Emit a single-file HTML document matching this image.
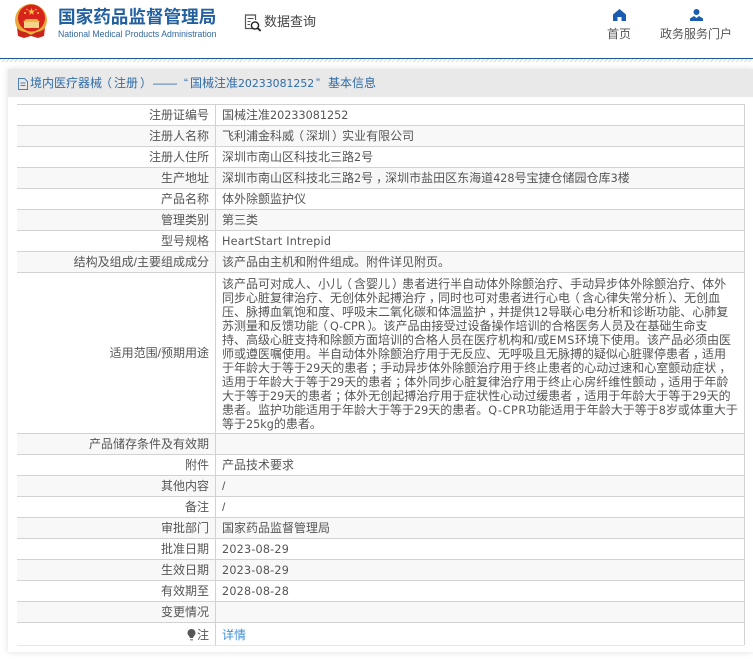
<!DOCTYPE html>
<html lang="zh"><head><meta charset="utf-8"><style>
html,body{margin:0;padding:0;background:#fff}
body{width:753px;height:660px;position:relative;overflow:hidden;font-family:"Liberation Sans","Noto Sans CJK SC",sans-serif;font-size:12px;color:#555}
.a{position:absolute;white-space:nowrap}
.l{font-family:"DejaVu Sans",sans-serif;font-size:11.2px;line-height:0}
.s{letter-spacing:.2px}
.w{letter-spacing:.6px}
.o,.c,.m{position:relative;line-height:0}
.o{left:-2px}.c{left:2px}.m{left:3px}
.panel{position:absolute;left:8px;top:69px;width:745px;height:583px;background:#fff;box-shadow:0 0 6px rgba(0,0,0,.14)}
.bar{position:absolute;left:8px;top:69px;width:745px;height:28px;background:#e9e9e9}
.r{position:absolute;left:17px;width:727px;height:20px;border-top:1px solid #d2d2d2;line-height:20px}
.g{background:#f8f8f8}
.k{position:absolute;right:535px;top:0;white-space:nowrap}
.v{position:absolute;left:205px;top:0;white-space:nowrap}
.d{position:absolute;left:215px;top:104px;width:1px;height:541px;background:#d2d2d2}
.t{position:absolute;left:222px;top:277px;line-height:14px;white-space:nowrap}
.h{color:#2f6ca8;top:75px;line-height:17px}
</style></head><body>
<svg class="a" style="left:14px;top:3px" width="34" height="36" viewBox="0 0 34 36">
<ellipse cx="17" cy="17" rx="16" ry="16" fill="#e9a93a"/><circle cx="17.500" cy="15" r="13.500" fill="#d8231c"/>
<path d="M17.500 5l1 2.600h2.600l-2.100 1.700.8 2.600-2.300-1.600-2.300 1.600.8-2.600-2.100-1.700h2.600z" fill="#f6c644"/>
<circle cx="11" cy="10" r="1" fill="#f6c644"/><circle cx="24" cy="10" r="1" fill="#f6c644"/><circle cx="13" cy="6.500" r=".8" fill="#f6c644"/><circle cx="22" cy="6.500" r=".8" fill="#f6c644"/>
<rect x="10" y="19" width="15" height="6" fill="#f3d48a"/><path d="M9 19h17l-3-3H12z" fill="#f0b93c"/>
<path d="M3 25c3 3 6 4 9 4l5 2 5-2c3 0 6-1 9-4l-1 8-6 2-7-2-7 2-6-2z" fill="#c8281c"/><path d="M9 27l8 4 8-4" stroke="#f0b93c" stroke-width="1.500" fill="none"/>
</svg>
<div class="a" style="left:58px;top:6px;font-size:17.600px;line-height:22px;font-weight:700;color:#23609f">国家药品监督管理局</div>
<div class="a" style="left:58px;top:28px;font-size:8.720px;line-height:12px;color:#33689f">National Medical Products Administration</div>
<svg class="a" style="left:244px;top:14px" width="20" height="20" viewBox="0 0 20 20" fill="none" stroke="#555"><path d="M9 14.500H1.500V1h10v5" stroke-width="1.200"/><path d="M3.500 4.500h6M3.500 7.500h3M3.500 10.500h2.500" stroke-width="1.100"/><circle cx="11" cy="11.500" r="3.600" stroke="#222" stroke-width="1.400"/><path d="M13.700 14.200l3 2.800" stroke="#222" stroke-width="1.800"/></svg>
<div class="a" style="left:264px;top:13px;font-size:13px;line-height:18px;color:#444">数据查询</div>
<svg class="a" style="left:613px;top:9px" width="13" height="12" viewBox="0 0 13 12"><path d="M6.500 0L13 5.500V12H8.500V8h-4v4H0V5.500z" fill="#1a5cb0"/></svg>
<svg class="a" style="left:690px;top:9px" width="13" height="12" viewBox="0 0 13 12"><circle cx="6.500" cy="3" r="3" fill="#1a5cb0"/><path d="M0 12V9.500L4 7l2.500 2L9 7l4 2.500V12z" fill="#1a5cb0"/></svg>
<div class="a" style="left:607px;top:26px;line-height:17px;color:#555">首页</div>
<div class="a" style="left:660px;top:26px;line-height:17px;color:#555">政务服务门户</div>
<div class="a" style="left:0;top:58px;width:753px;height:1px;background:#1f5c99"></div>
<div class="a" style="left:0;top:59px;width:753px;height:3px;background:repeating-linear-gradient(135deg,#d9d9d9 0 1px,#fff 1px 3px)"></div>
<div class="panel"></div><div class="bar"></div>
<svg class="a" style="left:18px;top:78px" width="10" height="12" viewBox="0 0 10 12" fill="none" stroke="#4f7fb0"><path d="M.5.500h6l3 3v8H.500zM2.500 5h5M2.500 7.500h5"/></svg>
<div class="a h" style="left:30px">境内医疗器械<span class="o">（</span>注册<span class="c">）</span></div>
<div class="a h" style="left:153px">——</div>
<div class="a h" style="left:184px">“</div>
<div class="a h" style="left:190px">国械注准</div>
<div class="a h l" style="left:238px;font-size:10.900px;line-height:17px">20233081252</div>
<div class="a h" style="left:316px">”</div>
<div class="a h" style="left:328px">基本信息</div>

<div class="r" style="top:104px"><div class="k">注册证编号</div><div class="v">国械注准<span class="l">20233081252</span></div></div>
<div class="r g" style="top:125px"><div class="k">注册人名称</div><div class="v">飞利浦金科威<span class="o">（</span>深圳<span class="c">）</span>实业有限公司</div></div>
<div class="r" style="top:146px"><div class="k">注册人住所</div><div class="v">深圳市南山区科技北三路<span class="l">2</span>号</div></div>
<div class="r g" style="top:167px"><div class="k">生产地址</div><div class="v">深圳市南山区科技北三路<span class="l">2</span>号<span class="m">，</span>深圳市盐田区东海道<span class="l">428</span>号宝捷仓储园仓库<span class="l">3</span>楼</div></div>
<div class="r" style="top:188px"><div class="k">产品名称</div><div class="v">体外除颤监护仪</div></div>
<div class="r g" style="top:209px"><div class="k">管理类别</div><div class="v">第三类</div></div>
<div class="r" style="top:230px"><div class="k">型号规格</div><div class="v"><span class="l s">HeartStart Intrepid</span></div></div>
<div class="r g" style="top:251px"><div class="k">结构及组成/主要组成成分</div><div class="v">该产品由主机和附件组成。附件详见附页。</div></div>
<div class="r" style="top:272px;height:160px;line-height:160px"><div class="k">适用范围/预期用途</div></div>
<div class="t">该产品可对成人、小儿<span class="o">（</span>含婴儿<span class="c">）</span>患者进行半自动体外除颤治疗、手动异步体外除颤治疗、体外<br>同步心脏复律治疗、无创体外起搏治疗<span class="m">，</span>同时也可对患者进行心电<span class="o">（</span>含心律失常分析<span class="c">）</span>、无创血<br>压、脉搏血氧饱和度、呼吸末二氧化碳和体温监护<span class="m">，</span>并提供<span class="l">12</span>导联心电分析和诊断功能、心肺复<br>苏测量和反馈功能<span class="o">（</span><span class="l">Q-CPR</span><span class="c">）</span>。该产品由接受过设备操作培训的合格医务人员及在基础生命支<br>持、高级心脏支持和除颤方面培训的合格人员在医疗机构和/或<span class="l w">EMS</span>环境下使用。该产品必须由医<br>师或遵医嘱使用。半自动体外除颤治疗用于无反应、无呼吸且无脉搏的疑似心脏骤停患者<span class="m">，</span>适用<br>于年龄大于等于<span class="l">29</span>天的患者<span class="m">；</span>手动异步体外除颤治疗用于终止患者的心动过速和心室颤动症状<span class="m">，</span><br>适用于年龄大于等于<span class="l">29</span>天的患者<span class="m">；</span>体外同步心脏复律治疗用于终止心房纤维性颤动<span class="m">，</span>适用于年龄<br>大于等于<span class="l">29</span>天的患者<span class="m">；</span>体外无创起搏治疗用于症状性心动过缓患者<span class="m">，</span>适用于年龄大于等于<span class="l">29</span>天的<br>患者。监护功能适用于年龄大于等于<span class="l">29</span>天的患者。<span class="l w">Q-CPR</span>功能适用于年龄大于等于<span class="l">8</span>岁或体重大于<br>等于<span class="l">25kg</span>的患者。</div>
<div class="r g" style="top:433px"><div class="k">产品储存条件及有效期</div></div>
<div class="r" style="top:454px"><div class="k">附件</div><div class="v">产品技术要求</div></div>
<div class="r g" style="top:475px"><div class="k">其他内容</div><div class="v">/</div></div>
<div class="r" style="top:496px"><div class="k">备注</div><div class="v">/</div></div>
<div class="r g" style="top:517px"><div class="k">审批部门</div><div class="v">国家药品监督管理局</div></div>
<div class="r" style="top:538px"><div class="k">批准日期</div><div class="v"><span class="l s">2023-08-29</span></div></div>
<div class="r g" style="top:559px"><div class="k">生效日期</div><div class="v"><span class="l s">2023-08-29</span></div></div>
<div class="r" style="top:580px"><div class="k">有效期至</div><div class="v"><span class="l s">2028-08-28</span></div></div>
<div class="r g" style="top:601px"><div class="k">变更情况</div></div>
<div class="r" style="top:622px;height:22px;line-height:24px;border-bottom:1px solid #e8e8e8"><div class="k">注</div><div class="v" style="color:#3f8fd8">详情</div></div>
<svg class="a" style="left:187px;top:629px" width="9" height="12" viewBox="0 0 9 12"><path d="M4.500 0a4 4 0 0 1 4 4c0 2-2 3-2.500 5h-3C2.500 7 .5 6 .5 4a4 4 0 0 1 4-4z" fill="#555"/><rect x="3" y="10" width="3" height="1.500" fill="#999"/></svg>
<div class="d"></div>
<div class="a" style="left:744px;top:104px;width:1px;height:541px;background:#d2d2d2"></div>
</body></html>
